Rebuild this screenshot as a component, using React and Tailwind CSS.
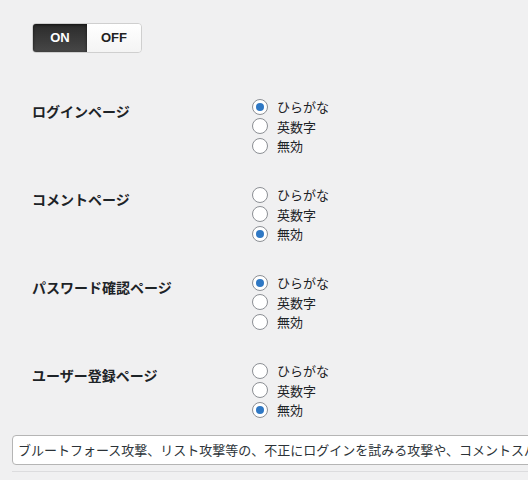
import React, { useState } from "react";

const font = { fontFamily: '"Noto Sans CJK JP", "Noto Sans", "Liberation Sans", sans-serif' };

const sections = [
  { key: "login", label: "ログインページ", value: "hiragana" },
  { key: "comment", label: "コメントページ", value: "off" },
  { key: "password", label: "パスワード確認ページ", value: "hiragana" },
  { key: "register", label: "ユーザー登録ページ", value: "off" },
];

const options = [
  { value: "hiragana", text: "ひらがな" },
  { value: "alnum", text: "英数字" },
  { value: "off", text: "無効" },
];

function Radio({ checked, onClick, children }) {
  return (
    <label className="flex h-[19.5px] cursor-pointer items-center gap-[9px]" onClick={onClick}>
      <span className="flex h-[16px] w-[16px] shrink-0 items-center justify-center rounded-full border border-[#8c8f94] bg-white">
        {checked && <span className="h-[8px] w-[8px] rounded-full bg-[#2f78c4]" />}
      </span>
      <span className="text-[13px] leading-none text-[#1d2327]">{children}</span>
    </label>
  );
}

export default function App() {
  const [on, setOn] = useState(true);
  const [values, setValues] = useState(
    Object.fromEntries(sections.map((s) => [s.key, s.value]))
  );

  return (
    <div className="h-[480px] w-[528px] overflow-hidden bg-[#f0f0f1]" style={font}>
      <div className="pl-[32px] pt-[23px]">
        <div
          className="flex h-[30px] w-[110px] overflow-hidden rounded-[4px] border border-[#cfcfcf] text-[13px] font-bold"
          style={{ fontFamily: '"Liberation Sans", Arial, sans-serif' }}
        >
          <button
            onClick={() => setOn(true)}
            className={
              on
                ? "flex w-[55px] items-center justify-center bg-gradient-to-b from-[#2b2b2b] to-[#474747] text-white shadow-[inset_0_1px_3px_rgba(0,0,0,0.6)]"
                : "flex w-[55px] items-center justify-center bg-gradient-to-b from-white to-[#f4f4f4] text-[#222]"
            }
          >
            ON
          </button>
          <button
            onClick={() => setOn(false)}
            className={
              !on
                ? "flex w-[55px] items-center justify-center bg-gradient-to-b from-[#2b2b2b] to-[#474747] text-white shadow-[inset_0_1px_3px_rgba(0,0,0,0.6)]"
                : "flex w-[55px] items-center justify-center bg-gradient-to-b from-white to-[#f4f4f4] text-[#222]"
            }
          >
            OFF
          </button>
        </div>
      </div>

      <div className="mt-[29px] pl-[32px]">
        {sections.map((s) => (
          <div key={s.key} className="flex h-[88px]">
            <div className="w-[220px] pt-[20px] text-[14px] font-bold leading-[1.3] text-[#1d2327]">
              {s.label}
            </div>
            <div className="pt-[15px]">
              {options.map((o) => (
                <Radio
                  key={o.value}
                  checked={values[s.key] === o.value}
                  onClick={() => setValues({ ...values, [s.key]: o.value })}
                >
                  {o.text}
                </Radio>
              ))}
            </div>
          </div>
        ))}
      </div>

      <div className="ml-[12px] mt-[1px] w-[700px]">
        <div className="flex h-[30px] items-center whitespace-nowrap rounded-[4px] border border-[#b5b5b5] bg-white px-[5px] text-[13px] text-[#2c3338]">
          ブルートフォース攻撃、リスト攻撃等の、不正にログインを試みる攻撃や、コメントスパムを防ぎます。
        </div>
        <div className="mt-[6px] h-px bg-[#dcdcde]" />
      </div>
    </div>
  );
}
